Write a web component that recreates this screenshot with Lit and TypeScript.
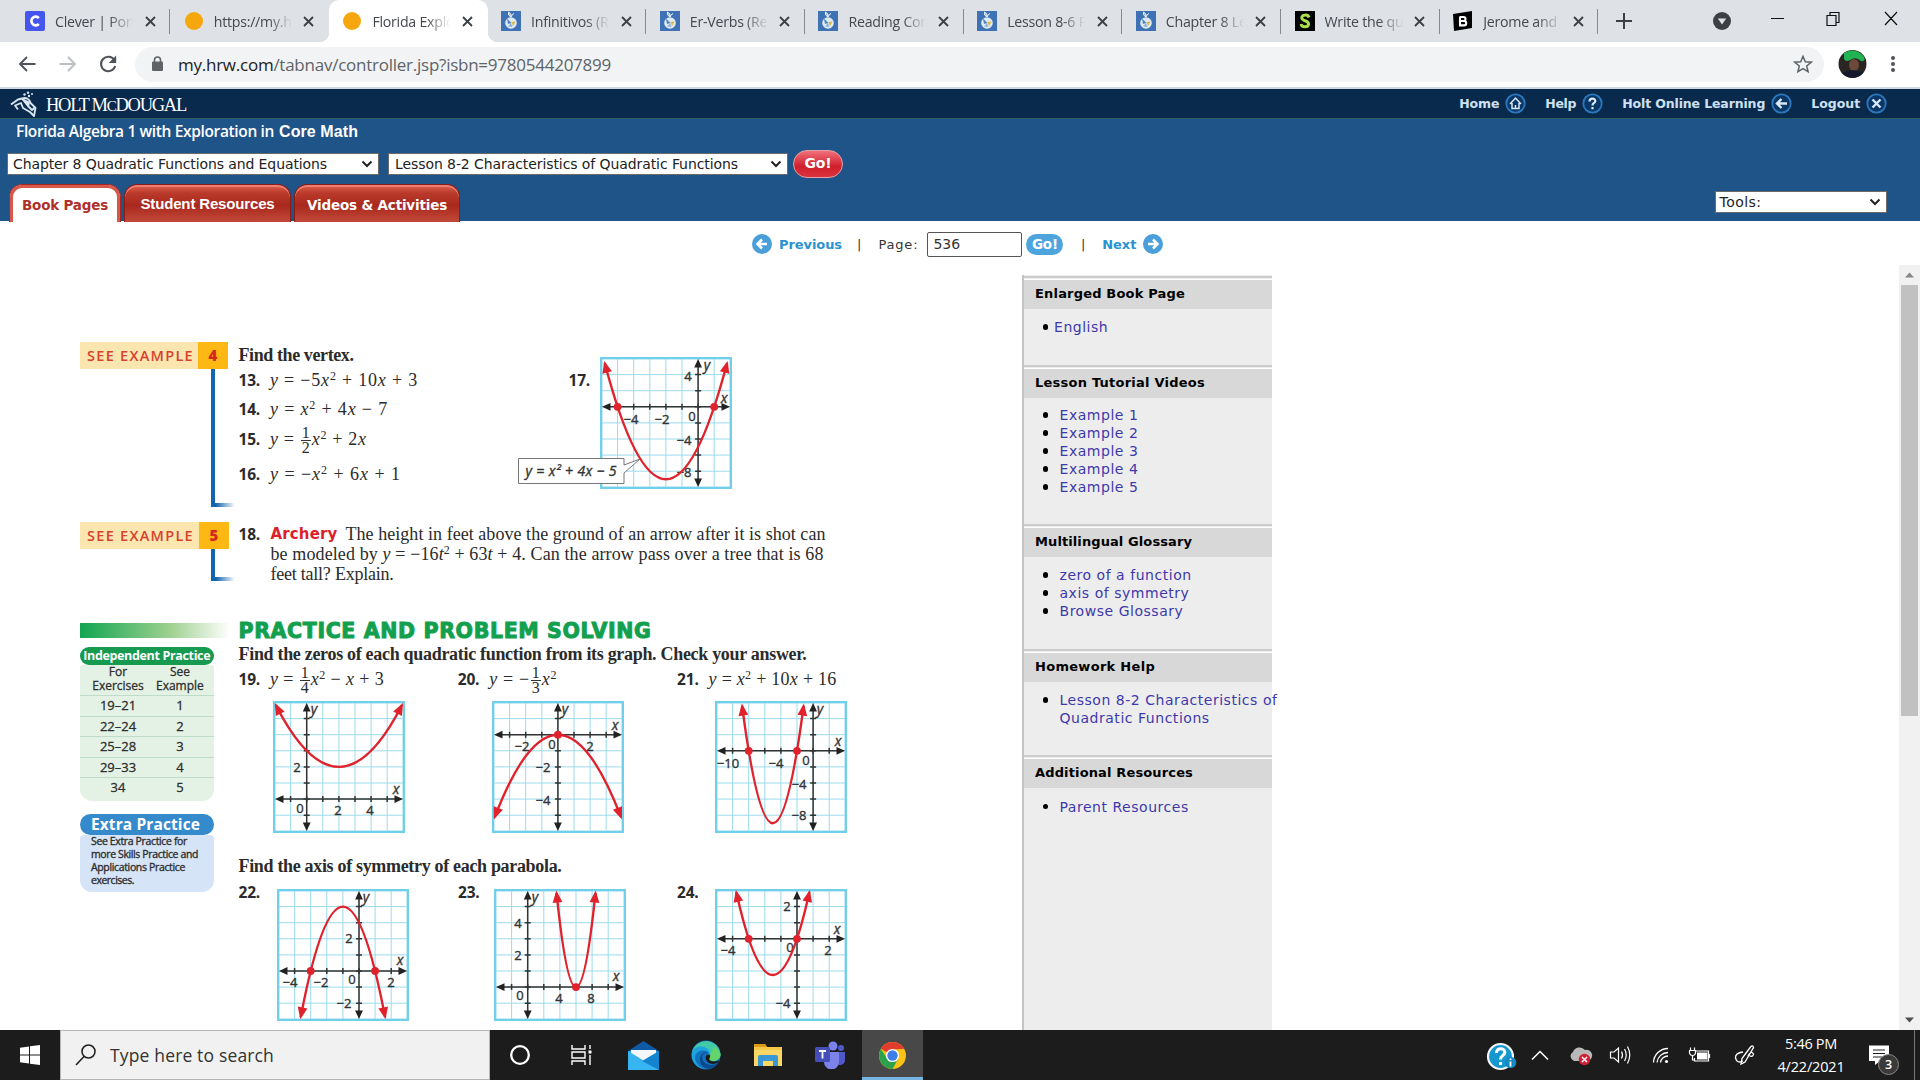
import { LitElement, html, svg, css, nothing } from "lit";
import { customElement, property } from "lit/decorators.js";

/** Sets its text to a given measure by distributing letter spacing. */
@customElement("fit-text")
class FitText extends LitElement {
  @property({ type: Number }) w = 0;
  static styles = css`:host { display: inline-block; white-space: pre; }`;
  firstUpdated() {
    const natural = this.getBoundingClientRect().width;
    const n = (this.textContent || "").length;
    if (this.w && n) this.style.letterSpacing = (this.w - natural) / n + "px";
  }
  render() { return html`<slot></slot>`; }
}

type Label = [string, number, number];
interface Plot {
  ox: number; oy: number; vx: number; vy: number; k: number; s: number;
  dots: [number, number][]; labels: Label[]; callout?: boolean;
}

const PLOTS: Record<string, Plot> = {
  17: { ox: 6, oy: 3, vx: 4, vy: 7.5, k: -0.5, s: 3.8, dots: [[1, 3], [7, 3]], callout: true,
    labels: [["4", 88, 19], ["y", 107, 8], ["x", 124, 41], ["−4", 31, 62], ["−2", 62, 62], ["0", 92, 59], ["−4", 84, 83], ["−8", 84, 115]] },
  19: { ox: 2, oy: 6, vx: 4, vy: 4, k: -0.25, s: 3.92, dots: [],
    labels: [["y", 41, 8], ["x", 123, 88], ["2", 24, 66], ["0", 27, 107], ["2", 65, 109], ["4", 97, 109]] },
  20: { ox: 4, oy: 2, vx: 4, vy: 2, k: 1 / 3, s: 3.92, dots: [[4, 2]],
    labels: [["y", 73, 8], ["x", 123, 24], ["−2", 30, 45], ["0", 60, 43], ["2", 98, 45], ["−2", 51, 66], ["−4", 51, 99]] },
  21: { ox: 6, oy: 3, vx: 3.5, vy: 7.5, k: -2, s: 1.91, dots: [[2, 3], [5, 3]],
    labels: [["y", 105, 8], ["x", 123, 40], ["−10", 13, 62], ["−4", 61, 62], ["0", 91, 59], ["−4", 84, 83], ["−8", 84, 114]] },
  22: { ox: 5, oy: 5, vx: 4, vy: 1, k: 1, s: 2.62, dots: [[2, 5], [6, 5]],
    labels: [["y", 89, 8], ["x", 123, 71], ["2", 72, 49], ["−4", 13, 93], ["−2", 44, 93], ["0", 75, 90], ["2", 114, 93], ["−2", 67, 114]] },
  23: { ox: 2, oy: 6, vx: 5, vy: 6, k: -4, s: 1.21, dots: [[5, 6]],
    labels: [["y", 41, 8], ["x", 122, 87], ["4", 24, 34], ["2", 24, 66], ["0", 26, 106], ["4", 65, 109], ["8", 97, 109]] },
  24: { ox: 5, oy: 3, vx: 3.5, vy: 5.25, k: -1, s: 2.27, dots: [[2, 3], [5, 3]],
    labels: [["x", 122, 40], ["2", 72, 17], ["−4", 13, 61], ["0", 75, 58], ["2", 113, 61], ["−4", 68, 114]] },
};

@customElement("parabola-graph")
class ParabolaGraph extends LitElement {
  @property() n = "17";
  static styles = css`
    :host { display: block; width: 132px; height: 132px; }
    svg { display: block; overflow: visible; }
    .frame { fill: #fff; stroke: #72cfe9; stroke-width: 2.4; }
    .grid { stroke: #9bdbec; stroke-width: 1; }
    .axis { stroke: #333; stroke-width: 1.5; fill: none; }
    .head { fill: #222; }
    .curve { stroke: #e0222d; stroke-width: 2.4; fill: none; }
    .red { fill: #e0222d; }
    text { font: 500 13px "Open Sans", "Noto Sans", sans-serif; fill: #333; text-anchor: middle; stroke: #333; stroke-width: .35; }
    .it { font-style: italic; font-size: 14px; }
    .note { fill: #fff; stroke: #777; stroke-width: 1; }
  `;
  render() {
    const p = PLOTS[this.n];
    const c = (v: number) => 1.5 + 16.1 * v;
    const idx = [1, 2, 3, 4, 5, 6, 7];
    const lift = p.k * p.s * p.s;
    const X = c(p.ox), Y = c(p.oy);
    const x0 = c(p.vx - p.s), x1 = c(p.vx + p.s), ye = c(p.vy + lift);
    const ang = (Math.atan2(2 * p.k * p.s, 1) * 180) / Math.PI;
    const tip = (x: number, y: number, a: number, cls: string, l = 9, w = 4) =>
      svg`<path class=${cls} transform="translate(${x} ${y}) rotate(${a})" d="M0 0L${-l} ${-w}L${-l} ${w}Z"/>`;
    const tx = 2.2 * Math.cos((ang * Math.PI) / 180), ty = 2.2 * Math.sin((ang * Math.PI) / 180);
    return html`<svg width="132" height="132" viewBox="0 0 132 132">
      <rect class="frame" x="1.2" y="1.2" width="129.6" height="129.6"/>
      ${idx.map((i) => svg`<path class="grid" d="M${c(i)} 2V130M2 ${c(i)}H130"/>`)}
      <path class="axis" d="M5 ${Y}H127M${X} 5V127"/>
      ${idx.map((i) => svg`<path class="axis" d="M${c(i)} ${Y - 3}v6M${X - 3} ${c(i)}h6"/>`)}
      ${tip(2, Y, 180, "head", 8.5, 3.9)}${tip(130, Y, 0, "head", 8.5, 3.9)}
      ${tip(X, 2, -90, "head", 8.5, 3.9)}${tip(X, 130, 90, "head", 8.5, 3.9)}
      ${p.labels.map(([t, x, y]) => svg`<text class=${t === "x" || t === "y" ? "it" : ""} x=${x} y=${y + 4.7}>${t}</text>`)}
      <path class="curve" d="M${x0} ${ye}Q${c(p.vx)} ${c(p.vy - lift)} ${x1} ${ye}"/>
      ${tip(x1 + tx, ye + ty, ang, "red", 12, 4.9)}${tip(x0 - tx, ye + ty, 180 - ang, "red", 12, 4.9)}
      ${p.dots.map(([x, y]) => svg`<circle class="red" cx=${c(x)} cy=${c(y)} r="3.9"/>`)}
      ${p.callout
        ? svg`<path class="note" d="M-81.5 101.5H24V108L40 102L24 116V126.500H-81.5Z"/>
          <text class="it" x="-29" y="119" textLength="91"><tspan>y</tspan> = x² + 4x − 5</text>`
        : nothing}
    </svg>`;
  }
}

const TABS = [
  ["clever", "Clever | Portal"], ["sun", "https://my.hrw.com"], ["sun", "Florida Exploration"],
  ["apple", "Infinitivos (Realidades)"], ["apple", "Er-Verbs (Realidades)"], ["apple", "Reading Comprehension"],
  ["apple", "Lesson 8-6 Practice"], ["apple", "Chapter 8 Lesson"], ["slader", "Write the quadratic"], ["brainly", "Jerome and his"],
];

const SECTIONS: { title: string; cls: string; links: string[] }[] = [
  { title: "Enlarged Book Page", cls: "s0", links: ["English"] },
  { title: "Lesson Tutorial Videos", cls: "s1", links: ["Example 1", "Example 2", "Example 3", "Example 4", "Example 5"] },
  { title: "Multilingual Glossary", cls: "s2", links: ["zero of a function", "axis of symmetry", "Browse Glossary"] },
  { title: "Homework Help", cls: "s3", links: ["Lesson 8-2 Characteristics of\nQuadratic Functions"] },
  { title: "Additional Resources", cls: "s4", links: ["Parent Resources"] },
];
const TITLE_W = [150, 170, 157, 120, 158];

@customElement("app-root")
class AppRoot extends LitElement {
  static styles = css`
    :host { display: block; width: 1920px; height: 1080px; overflow: hidden; background: #fff; color: #222; font-family: "Open Sans", "Noto Sans", sans-serif; }
    * { box-sizing: border-box; }
    svg { display: block; flex: none; }
    .row { display: flex; align-items: center; }
    .page { display: flex; flex-direction: column; height: 1080px; }

    .strip { display: flex; height: 42px; background: #dee1e6; padding-left: 11.5px; }
    .tab { width: 158.7px; height: 42px; display: flex; align-items: center; padding-left: 13.5px; flex: none; position: relative; }
    .tab.sep { background: linear-gradient(#868a8e, #868a8e) right 9px / 1px 25px no-repeat; }
    .tab.on { background: #fff; border-radius: 10px 10px 0 0; }
    .tab.on::before, .tab.on::after { content: ""; position: absolute; bottom: 0; width: 10px; height: 10px; }
    .tab.on::before { left: -10px; background: radial-gradient(circle at 0 0, transparent 10px, #fff 10.5px); }
    .tab.on::after { right: -10px; background: radial-gradient(circle at 100% 0, transparent 10px, #fff 10.5px); }
    .title { width: 80px; margin-left: 10px; overflow: hidden; white-space: nowrap; font-size: 14.2px; letter-spacing: -.25px; color: #45494d; -webkit-mask-image: linear-gradient(90deg, #000 68%, transparent 98%); }
    .close { margin-left: 9.5px; }
    .plus { margin: 13px 0 0 17.5px; }
    .wc { display: flex; align-items: center; margin-left: auto; height: 42px; }

    .bar { height: 47px; display: flex; align-items: center; border-bottom: 2px solid #cfdae6; padding: 0 0 1px 17px; background: #fff; }
    .pill { display: flex; align-items: center; width: 1689px; height: 35px; border-radius: 18px; background: #f1f3f4; margin-left: 15px; padding-left: 16px; }
    .url { font-size: 17px; color: #5f6368; margin-left: 14px; }
    .url b { font-weight: 400; color: #202124; }
    .pill .star { margin-left: auto; margin-right: 11px; }

    .navy { height: 30px; background: #0a2a4d; border-bottom: 1px solid #2c5d5d; display: flex; align-items: center; padding-left: 10px; color: #fff; }
    .holt { font-family: "Liberation Serif", serif; font-size: 18.5px; margin-left: 9px; line-height: 24px; padding-top: 3px; }
    .small { font-size: 15px; }
    .top { margin-left: auto; display: flex; align-items: center; padding: 0 33.5px 1px 0; font: bold 12.5px "DejaVu Sans", sans-serif; color: #cfe0f2; }
    .top svg { margin: 0 19.7px 0 5.3px; }
    .top svg:last-child { margin-right: 0; }
    .blue { height: 102px; background: #1f5488; display: flex; justify-content: space-between; }
    .subject { color: #fff; font-weight: 600; font-size: 15.5px; line-height: 20px; margin: 2px 0 0 16px; display: flex; gap: 5px; }
    .subject .core { font-family: "Liberation Sans", sans-serif; font-weight: 700; font-size: 16px; padding-top: 1px; }
    .picks { display: flex; align-items: center; margin: 7px 0 0 7px; height: 29px; }
    .select { height: 22px; background: #fff; border: 1px solid #6b6b6b; display: flex; align-items: center; justify-content: space-between; padding: 0 5px; font: 14px "DejaVu Sans", sans-serif; color: #222; }
    .c1 { width: 372px; } .c2 { width: 400px; margin: 0 5px 0 9px; padding-left: 6px; }
    .tools { width: 172px; margin: 72px 33.5px 0 0; padding-left: 4px; }
    .go { width: 50px; height: 28px; border-radius: 14px; background: linear-gradient(#f0707a, #cf1f2c 60%, #dc3340); border: 1.5px solid #e4a0a8; color: #fff; font: bold 14px/24px "DejaVu Sans", sans-serif; text-align: center; }
    .rtabs { display: flex; gap: 3px; margin: 6px 0 0 9px; height: 38px; }
    .rt { height: 38px; border-radius: 13px 13px 0 0; color: #fff; background: linear-gradient(#e2604f, #b93a2b 22%, #a9281d 55%, #c14a3a); border: 1.5px solid #8c1c18; border-bottom: 0; box-shadow: inset 0 2px 0 #e98072; display: flex; align-items: center; justify-content: center; font: bold 14.5px "DejaVu Sans", sans-serif; padding-top: 2px; }
    .rt.a { width: 112px; background: #fff; color: #b0302a; box-shadow: inset 0 0 0 3px #d8584c; border-color: #a62620; font-size: 13.5px; position: relative; border-bottom: 0; }
    .rt.a::after { content: ""; position: absolute; left: 3px; right: 3px; bottom: 0; height: 4px; background: #fff; }
    .rt.b { width: 167px; font: bold 15px "Liberation Sans", sans-serif; padding-top: 0; }
    .rt.c { width: 166px; font-size: 13.5px; }

    .pager { height: 44px; display: flex; align-items: center; padding: 2px 0 0 752px; font: 13px "DejaVu Sans", sans-serif; color: #333; }
    .bar1 { margin-left: 15px; } .pg { margin-left: 17px; } .bar2 { margin-left: 17.5px; }
    .prev { margin-left: 7px; } .next { margin: 0 7px 0 17px; }
    .lk { color: #2a93cf; font: bold 13px "DejaVu Sans", sans-serif; }
    .field { width: 95px; height: 25px; border: 1.5px solid #555; border-radius: 2px; padding-left: 5px; line-height: 23px; font-size: 14px; margin-left: 9px; }
    .go2 { width: 37px; height: 21px; border-radius: 10.500px; background: #4ea5dd; color: #fff; font: bold 13.5px/20px "DejaVu Sans", sans-serif; text-align: center; margin-left: 4px; }

    .main { display: flex; height: 765px; overflow: hidden; }
    .book { width: 1022px; padding-left: 80px; flex: none; color: #2b2b2b; }
    .block { display: flex; }
    .left { width: 158.500px; flex: none; }
    .see { display: flex; height: 27px; width: 148px; background: #fbe6b0; color: #d8412f; font-weight: 600; font-size: 14.500px; line-height: 27px; padding-left: 7px; justify-content: space-between; }
    .see i { font: 800 15px/27px "Open Sans", sans-serif; background: #fdb813; width: 30px; text-align: center; color: #d4281e; }
    .hook { width: 24px; margin-left: 131px; background: linear-gradient(#1266b0, #1266b0) left top / 4px 100% no-repeat, linear-gradient(90deg, #1266b0 20%, #fff) left bottom / 24px 4px no-repeat; }
    .b1 { padding-top: 77px; height: 257px; }
    .b1 .hook { height: 138px; } .b2 .hook { height: 32px; }
    .b2 { height: 101px; } .b2 .see { width: 149px; }
    .ln { font-family: "Liberation Serif", serif; font-size: 18px; line-height: 20px; height: 20px; display: flex; white-space: nowrap; }
    .bd { font-weight: 700; }
    .no { font: 700 15.5px/20px "Open Sans", sans-serif; width: 31.500px; flex: none; letter-spacing: -.2px; }
    em { font-style: italic; }
    sup { font-size: 12px; line-height: 0; vertical-align: 6px; }
    .frac { display: inline-flex; flex-direction: column; vertical-align: middle; text-align: center; line-height: 14px; margin: -8px 1px; font-size: 16px; letter-spacing: 0; }
    .frac span:first-child { border-bottom: 1px solid #333; padding: 0 1px; }
    .m5 { margin-top: 5px; } .m9 { margin-top: 9px; } .m10 { margin-top: 10px; } .m14 { margin-top: 15px; }
    .probs { width: 330px; padding-top: 3px; }
    .n17 { padding-top: 28px; width: 31px; } .g17 { padding-top: 15px; }
    .arch { color: #dd1f2b; font: bold 15px/20px "DejaVu Sans", sans-serif; margin-right: 8px; }
    .in { padding-left: 32px; }
    .t18 .no { width: 32px; }
    .t18 .ln:first-child { margin-top: 2px; }
    .pbar { width: 150px; height: 15px; background: linear-gradient(90deg, #12a551, #9ed08f 60%, #fff); }
    h2 { margin: 0; font: bold 20.5px/22px "DejaVu Sans", sans-serif; color: #12a04f; -webkit-text-stroke: 1px #12a04f; height: 21px; display: flex; margin-top: -3.500px; }
    .zeros { margin-top: 3.500px; } .eqs { margin-top: 5px; }
    .ip { margin-top: 9px; width: 133.500px; height: 18px; border-radius: 9px; background: #159a50; color: #fff; font: 700 12.5px/17px "Open Sans", sans-serif; text-align: center; }
    .tbl { width: 133.500px; height: 136px; background: #e3f2e5; border-radius: 3px 3px 12px 12px; display: grid; grid-template-columns: 76px 1fr; grid-template-rows: 31px repeat(5, 20.6px); font-size: 13px; font-weight: 500; text-align: center; line-height: 19px; }
    .tbl div { border-bottom: 1px solid #bfdcc8; -webkit-text-stroke: .3px #333; }
    .tbl div:nth-last-child(-n+2) { border: 0; }
    .tbl .hd { line-height: 14px; font-size: 12px; }
    .tbl .r { padding-right: 10px; }
    .ep { margin-top: 12.500px; width: 133.500px; height: 21.5px; border-radius: 11px; background: #358acb; color: #fff; font: 700 15.5px/20px "Open Sans", sans-serif; padding-left: 11px; }
    .eb { width: 133.500px; height: 57px; border-radius: 4px 4px 12px 12px; background: #d5e4f6; padding: 0 0 0 11px; font-size: 10.5px; line-height: 13px; -webkit-text-stroke: .35px #333; }
    .eb div { height: 13px; }
    .three { display: flex; }
    .three .q { width: 219.300px; }
    .gr { display: flex; height: 132px; }
    .g1 { padding-left: 34px; gap: 87px; margin-top: 11.500px; height: 155.500px; }
    .g1 parabola-graph:last-child { margin-left: 4.500px; }
    .g2 { margin-top: 13px; }
    .g2 .row { align-items: flex-start; width: 219.500px; }
    .g2 .row:nth-child(2) { width: 219px; }
    .g2 .ln { margin-top: -7px; width: 38.500px; }
    .g2 .row:nth-child(2) .ln { width: 35.500px; }
    .g2 .row:nth-child(3) .ln { width: 37.500px; }

    .side { width: 250px; background: #ededed; margin-top: 10px; border-left: 2px solid #c4c4c4; flex: none; font-family: "DejaVu Sans", sans-serif; }
    .sec { border-top: 2px solid #ccc; }
    .sec h3 { margin: 1px 0 0; border-top: 1px solid #fff; background: #d8d8d8; height: 30px; padding-left: 11px; font: bold 13px/27px "DejaVu Sans", sans-serif; color: #000; }
    .s0 { margin-top: 1px; height: 88.5px; } .s1 { height: 159px; } .s2 { height: 125px; } .s3 { height: 106.5px; }
    ul { margin: 8.500px 0 0; padding: 0; list-style: none; font-size: 14px; line-height: 18px; letter-spacing: .53px; }
    .s2 ul, .s3 ul, .s4 ul { margin-top: 9.500px; }
    .s0 ul { margin-top: 9px; }
    li { display: flex; color: #3d39ab; white-space: pre; padding-left: 18.500px; }
    li::before { content: ""; width: 5.500px; height: 5.500px; border-radius: 3px; background: #000; margin: 6px 11.500px 0 0; flex: none; }
    .s0 li::before { margin-right: 6px; }
    .sb { margin-left: auto; width: 21px; background: #f1f1f1; display: flex; flex-direction: column; align-items: center; padding: 7px 0; }
    .thumb { width: 17px; height: 431px; background: #c1c1c1; margin-top: 7px; }
    .sb svg:last-child { margin-top: auto; }

    .task { height: 50px; background: #1c1c1c; display: flex; color: #fff; }
    .start { width: 60px; padding: 15px 0 0 20px; }
    .search { width: 430px; height: 50px; background: #f1f1f1; border: 1px solid #b5b5b5; display: flex; align-items: center; padding-left: 14px; color: #333; font-size: 17.5px; }
    .search fit-text { margin-left: 14px; }
    .app { width: 62.200px; display: flex; align-items: center; justify-content: center; flex: none; }
    .app.first { width: 59px; margin-right: 1.500px; }
    .app.on { background: #484848; border-bottom: 3px solid #76b4e4; padding-top: 3px; width: 61px; margin-left: 1px; }
    .tray { margin-left: auto; display: flex; align-items: center; }
    .clock { width: 80px; text-align: center; font-size: 14.5px; line-height: 23px; }
    .edge { width: 6px; height: 50px; border-left: 1px solid #777; }
  `;

  fav(kind: string) {
    if (kind === "clever") return html`<svg width="20" height="20" viewBox="0 0 20 20"><rect width="20" height="20" rx="2" fill="#4556ee"/><path d="M13.800 7.200A4.200 4.300 0 1 0 13.800 12.800" fill="none" stroke="#fff" stroke-width="2.700"/></svg>`;
    if (kind === "sun") return html`<svg width="20" height="20" viewBox="0 0 20 20"><circle cx="10" cy="10" r="9" fill="#f5a70d"/></svg>`;
    if (kind === "apple") return html`<svg width="20" height="20" viewBox="0 0 20 20"><rect width="20" height="20" fill="#3f72b4"/><path d="M10 6Q6.500 4.500 7.500 1Q11 2.500 10 6Q11 3 13 2.500" stroke="#e8f0f8" stroke-width="1" fill="#e8f0f8" fill-opacity=".5"/><circle cx="10" cy="12" r="5.800" fill="#dfeaf5"/><path d="M10.500 12L6 7.500L7 13Z" fill="#4f86bd"/><path d="M10.500 11L14.500 10.500L12 15Z" fill="#d9b83f"/><path d="M10 12L7 15.500L11.500 16Z" fill="#8fb3d6"/></svg>`;
    if (kind === "slader") return html`<svg width="20" height="20" viewBox="0 0 20 20"><rect width="20" height="20" fill="#000"/><path d="M14 6.500C13 3 6.500 3.500 6.800 7C7 10.500 13.500 9 13.500 13C13.500 16.500 7 17 6 13" fill="none" stroke="#a9e04b" stroke-width="3"/></svg>`;
    return html`<svg width="20" height="20" viewBox="0 0 20 20"><path d="M0 3L19 0V17L1 20Z" fill="#000"/><path d="M7 5.500V14.500M7 6h3.500a2 2 0 0 1 0 4H7h4a2.200 2.200 0 0 1 0 4.400H6" fill="none" stroke="#fff" stroke-width="2.100"/></svg>`;
  }
  arrow(dir: number) {
    return html`<svg width="20" height="20" viewBox="0 0 20 20"><circle cx="10" cy="10" r="10" fill="#4a9fdb"/><path transform=${dir < 0 ? "" : "rotate(180 10 10)"} d="M15 10H6M10 5.500L5.500 10L10 14.500" fill="none" stroke="#fff" stroke-width="2.500"/></svg>`;
  }
  chev() {
    return html`<svg width="12" height="8" viewBox="0 0 12 8"><path d="M1.500 1.500L6 6L10.500 1.500" fill="none" stroke="#222" stroke-width="2"/></svg>`;
  }
  round(inner: unknown) {
    return html`<svg width="21" height="21" viewBox="0 0 21 21"><circle cx="10.500" cy="10.500" r="9.200" fill="#0b3767" stroke="#2b78bd" stroke-width="1.800"/>${inner}</svg>`;
  }

  chrome() {
    return html`
    <div class="strip">
      ${TABS.map(([k, t], i) => html`<div class="tab ${i === 2 ? "on" : i === 1 ? "" : "sep"}">
        ${this.fav(k)}<div class="title">${t}</div>
        <svg class="close" width="11" height="11" viewBox="0 0 11 11"><path d="M1 1L10 10M10 1L1 10" stroke="#3c4043" stroke-width="1.800"/></svg>
      </div>`)}
      <svg class="plus" width="16" height="16" viewBox="0 0 16 16"><path d="M8 0V16M0 8H16" stroke="#3c4043" stroke-width="2"/></svg>
      <div class="wc">
        <svg width="207" height="42" viewBox="0 0 207 42"><circle cx="9" cy="21" r="9" fill="#3c4043"/><path d="M4.800 18.500h8.400L9 24.500Z" fill="#dee1e6"/>
        <path d="M58 18.500H71M114 15.500h9v10h-9zM117 15.500v-3h9v10h-3M172 12L184 25M184 12L172 25" fill="none" stroke="#111" stroke-width="1.200"/></svg>
      </div>
    </div>
    <div class="bar">
      <svg width="103" height="22" viewBox="0 0 103 22">
        <path d="M18.500 11H3M10 4L3 11L10 18" fill="none" stroke="#50545a" stroke-width="1.900"/>
        <path d="M42.500 11H58M51 4L58 11L51 18" fill="none" stroke="#bcbfc3" stroke-width="1.900"/>
        <path d="M97.300 7A7.200 7.200 0 1 0 98.200 13" fill="none" stroke="#50545a" stroke-width="2.100"/><path d="M99.200 2.500V10H91.700Z" fill="#50545a"/>
      </svg>
      <div class="pill">
        <svg width="13" height="16" viewBox="0 0 13 16"><rect x="1" y="5.500" width="11" height="9.500" rx="1" fill="#5f6368"/><path d="M3.500 6V4a3 3 0 0 1 6 0V6" fill="none" stroke="#5f6368" stroke-width="1.600"/></svg>
        <div class="url"><fit-text w="433"><b>my.hrw.com</b>/tabnav/controller.jsp?isbn=9780544207899</fit-text></div>
        <svg class="star" width="20" height="20" viewBox="0 0 20 20"><path d="M10 2.300L12.300 7.700L18.200 8.200L13.700 12L15.100 17.700L10 14.700L4.900 17.700L6.300 12L1.800 8.200L7.700 7.700Z" fill="none" stroke="#5f6368" stroke-width="1.500"/></svg>
      </div>
      <svg width="80" height="30" viewBox="0 0 80 30"><circle cx="28.500" cy="15" r="14" fill="#2a2523"/><path d="M20 4A14 14 0 0 1 40 8Q42 13 37 12Q33 8 28 10Q22 14 20 10Z" fill="#21b351"/><ellipse cx="30" cy="16" rx="5" ry="6" fill="#6b4a3c"/><path d="M18 24Q28 18 39 24A14 14 0 0 1 18 24Z" fill="#141a2c"/>
      <g fill="#50545a"><circle cx="69" cy="9" r="2"/><circle cx="69" cy="15" r="2"/><circle cx="69" cy="21" r="2"/></g></svg>
    </div>`;
  }

  header() {
    return html`
    <div class="navy">
      <svg width="27" height="26" viewBox="0 0 27 26"><g fill="none" stroke="#d9e6f2" stroke-linejoin="round"><path d="M1 13.500L8 8.500L12 7.500L18 15L22 19L25.500 16" stroke-width="2"/><path d="M12 7.500C16 6 20 8 20.500 12L25.500 17L24 25L20 21L13 17L11 12L5 14.500L8 18.500" stroke-width="1.800"/></g><path d="M12 7L20 11L19 16Z" fill="#d9e6f2"/><g fill="#d9e6f2"><circle cx="14.500" cy="3.500" r="1.200"/><circle cx="18" cy="1.800" r="1.200"/><circle cx="19" cy="5" r="1.200"/><circle cx="22" cy="3" r="1"/></g></svg>
      <div class="holt"><fit-text w="140">HOLT M<span class="small">C</span>DOUGAL</fit-text></div>
      <div class="top">
        <fit-text w="40">Home</fit-text>${this.round(svg`<path d="M5 11L10.500 5L16 11M7 10V15.500H14V10M10.500 15.500V12" fill="none" stroke="#d8e9f8" stroke-width="1.500"/>`)}
        <fit-text w="31">Help</fit-text>${this.round(svg`<path d="M7.500 8.500C7.500 4.500 13.500 4.800 13.300 8.200C13.200 10 10.500 10 10.500 12.500M10.500 14V16.200" fill="none" stroke="#d8e9f8" stroke-width="2.200"/>`)}
        <fit-text w="143">Holt Online Learning</fit-text>${this.round(svg`<path d="M16 10.500H7M10.500 6L6 10.500L10.500 15" fill="none" stroke="#d8e9f8" stroke-width="2.400"/>`)}
        <fit-text w="49">Logout</fit-text>${this.round(svg`<path d="M6.500 6.500L14.500 14.500M14.500 6.500L6.500 14.500" stroke="#d8e9f8" stroke-width="2.400"/>`)}
      </div>
    </div>
    <div class="blue">
      <div>
        <div class="subject"><fit-text w="258">Florida Algebra 1 with Exploration in</fit-text><fit-text class="core" w="79">Core Math</fit-text></div>
        <div class="picks">
          <div class="select c1"><fit-text w="314">Chapter 8 Quadratic Functions and Equations</fit-text>${this.chev()}</div>
          <div class="select c2"><fit-text w="343">Lesson 8-2 Characteristics of Quadratic Functions</fit-text>${this.chev()}</div>
          <div class="go"><fit-text w="27">Go!</fit-text></div>
        </div>
        <div class="rtabs">
          <div class="rt a"><fit-text w="86">Book Pages</fit-text></div>
          <div class="rt b"><fit-text w="134">Student Resources</fit-text></div>
          <div class="rt c"><fit-text w="140">Videos &amp; Activities</fit-text></div>
        </div>
      </div>
      <div class="select tools"><fit-text w="42">Tools:</fit-text>${this.chev()}</div>
    </div>
    <div class="pager">
      ${this.arrow(-1)}<fit-text class="lk prev" w="63">Previous</fit-text>
      <span class="bar1">|</span><fit-text class="pg" w="40">Page:</fit-text>
      <div class="field">536</div><div class="go2"><fit-text w="26">Go!</fit-text></div>
      <span class="bar2">|</span><fit-text class="lk next" w="34">Next</fit-text>${this.arrow(1)}
    </div>`;
  }

  frac(a: string, b: string) {
    return html`<span class="frac"><span>${a}</span><span>${b}</span></span>`;
  }

  book() {
    const y = html`<em>y</em>`, x = html`<em>x</em>`, sq = html`<sup>2</sup>`;
    return html`<div class="book">
      <div class="block b1">
        <div class="left"><div class="see"><fit-text w="107">SEE EXAMPLE</fit-text><i>4</i></div><div class="hook"></div></div>
        <div class="probs">
          <div class="ln bd"><fit-text w="115">Find the vertex.</fit-text></div>
          <div class="ln m5"><span class="no">13.</span><fit-text w="148">${y} = −5${x}${sq} + 10${x} + 3</fit-text></div>
          <div class="ln m9"><span class="no">14.</span><fit-text w="118">${y} = ${x}${sq} + 4${x} − 7</fit-text></div>
          <div class="ln m10"><span class="no">15.</span><fit-text w="98">${y} = ${this.frac("1", "2")}${x}${sq} + 2${x}</fit-text></div>
          <div class="ln m14"><span class="no">16.</span><fit-text w="131">${y} = −${x}${sq} + 6${x} + 1</fit-text></div>
        </div>
        <div class="n17"><div class="ln"><span class="no">17.</span></div></div>
        <div class="g17"><parabola-graph n="17"></parabola-graph></div>
      </div>
      <div class="block b2">
        <div class="left"><div class="see"><fit-text w="107">SEE EXAMPLE</fit-text><i>5</i></div><div class="hook"></div></div>
        <div class="t18">
          <div class="ln"><span class="no">18.</span><fit-text class="arch" w="67">Archery</fit-text><fit-text w="480">The height in feet above the ground of an arrow after it is shot can</fit-text></div>
          <div class="ln in"><fit-text w="553">be modeled by ${y} = −16<em>t</em>${sq} + 63<em>t</em> + 4. Can the arrow pass over a tree that is 68</fit-text></div>
          <div class="ln in"><fit-text w="123">feet tall? Explain.</fit-text></div>
        </div>
      </div>
      <div class="block">
        <div class="left">
          <div class="pbar"></div>
          <div class="ip"><fit-text w="127">Independent Practice</fit-text></div>
          <div class="tbl">
            <div class="hd">For<br>Exercises</div><div class="hd r">See<br>Example</div>
            ${[["19–21", "1"], ["22–24", "2"], ["25–28", "3"], ["29–33", "4"], ["34", "5"]].map(([a, b]) => html`<div>${a}</div><div class="r">${b}</div>`)}
          </div>
          <div class="ep"><fit-text w="109">Extra Practice</fit-text></div>
          <div class="eb">
            <div><fit-text w="96">See Extra Practice for</fit-text></div><div><fit-text w="107">more Skills Practice and</fit-text></div>
            <div><fit-text w="94">Applications Practice</fit-text></div><div><fit-text w="43">exercises.</fit-text></div>
          </div>
        </div>
        <div>
          <h2><fit-text w="413">PRACTICE AND PROBLEM SOLVING</fit-text></h2>
          <div class="ln bd zeros"><fit-text w="568">Find the zeros of each quadratic function from its graph. Check your answer.</fit-text></div>
          <div class="three eqs">
            <div class="q ln"><span class="no">19.</span><fit-text w="115">${y} = ${this.frac("1", "4")}${x}${sq} − ${x} + 3</fit-text></div>
            <div class="q ln"><span class="no">20.</span><fit-text w="69">${y} = −${this.frac("1", "3")}${x}${sq}</fit-text></div>
            <div class="q ln"><span class="no">21.</span><fit-text w="128">${y} = ${x}${sq} + 10${x} + 16</fit-text></div>
          </div>
          <div class="gr g1">
            <parabola-graph n="19"></parabola-graph><parabola-graph n="20"></parabola-graph><parabola-graph n="21"></parabola-graph>
          </div>
          <div class="ln bd"><fit-text w="323">Find the axis of symmetry of each parabola.</fit-text></div>
          <div class="gr g2">
            ${["22", "23", "24"].map((n) => html`<div class="row"><div class="ln"><span class="no">${n}.</span></div><parabola-graph n=${n}></parabola-graph></div>`)}
          </div>
        </div>
      </div>
    </div>`;
  }

  side() {
    return html`<div class="side">
      ${SECTIONS.map((s, i) => html`<div class="sec ${s.cls}"><h3><fit-text w=${TITLE_W[i]}>${s.title}</fit-text></h3>
        <ul>${s.links.map((l) => html`<li><span>${l}</span></li>`)}</ul></div>`)}
    </div>
    <div class="sb">
      <svg width="9" height="6" viewBox="0 0 9 6"><path d="M0 5.500L4.500 .5L9 5.500Z" fill="#888"/></svg>
      <div class="thumb"></div>
      <svg width="9" height="6" viewBox="0 0 9 6"><path d="M0 .5L4.500 5.500L9 .5Z" fill="#505050"/></svg>
    </div>`;
  }

  task() {
    return html`<div class="task">
      <div class="start"><svg width="20" height="20" viewBox="0 0 20 20" fill="#fff"><path d="M0 2.800L9 1.500V9.500H0ZM10 1.300L20 0V9.500H10ZM0 10.500H9V18.500L0 17.200ZM10 10.500H20V20L10 18.700Z"/></svg></div>
      <div class="search"><svg width="21" height="22" viewBox="0 0 21 22"><circle cx="13.500" cy="7.500" r="6.500" fill="none" stroke="#222" stroke-width="1.600"/><path d="M9 12.500L1 21" stroke="#222" stroke-width="1.600"/></svg><fit-text w="164">Type here to search</fit-text></div>
      <div class="app first"><svg width="22" height="22" viewBox="0 0 22 22"><circle cx="11" cy="11" r="8.800" fill="none" stroke="#fff" stroke-width="2.300"/></svg></div>
      <div class="app"><svg width="22" height="20" viewBox="0 0 22 20"><path d="M1 0V4H14V0M1 20V16H14V20M1 7H14V13H1ZM19 0V4M19 10V20" fill="none" stroke="#fff" stroke-width="1.400"/><rect x="17.500" y="5.500" width="3" height="3" fill="#fff"/></svg></div>
      <div class="app"><svg width="31" height="29" viewBox="0 0 31 29"><path d="M0 10L15.500 0L31 10Z" fill="#0f5aa5"/><path d="M0 10H31V29H0Z" fill="#1f9be0"/><path d="M3 9H28V14L15.500 21L3 14Z" fill="#f4f8fb"/><path d="M0 10L31 29H0Z" fill="#36b5f0"/><path d="M31 10L14 20L31 29Z" fill="#1584cf"/></svg></div>
      <div class="app"><svg width="30" height="30" viewBox="0 0 30 30"><circle cx="15" cy="15" r="14.500" fill="#1272bd"/><path d="M1 12A14.500 14.500 0 0 1 29.500 14C29.500 20 24 21 20 20C18 19 20 18 19 15C17 8 6 6 1 12Z" fill="#42c9a8"/><path d="M1 12C5 3 19 6 19 14C14 8 5 10 4 17C4 24 10 29 17 29C7 30-1 22 1 12Z" fill="#1fa3df"/><path d="M17.500 12C10 12 9 21 16 24C20 26 25 25 27.500 22C24 31 10 31 9 21C8.500 16 12 11 17.500 12Z" fill="#0c4b91"/><path d="M19 15C19 18 17 19 19 20.500C23 22.500 30 20 29.500 14L24 6Z" fill="#63d56a"/><path d="M19.300 15.500C19 18 17.500 19 19 20.500C22 22 25.500 21.500 27.800 20.500L27.500 22.500Q21 25.500 16.500 22Q13 18 16 14.500Z" fill="#1c1c1c"/></svg></div>
      <div class="app"><svg width="28" height="24" viewBox="0 0 28 24"><path d="M0 1H11L13 4H28V23H0Z" fill="#f7c94b"/><path d="M0 1H11L13 4H0Z" fill="#dc9b17"/><path d="M0 7H28V23H0Z" fill="#fbd866"/><path d="M4 23V14a2 2 0 0 1 2-2H22a2 2 0 0 1 2 2V23H19V18H9V23Z" fill="#3a97d6"/></svg></div>
      <div class="app"><svg width="30" height="28" viewBox="0 0 30 28"><circle cx="18" cy="5" r="4.500" fill="#7b83eb"/><circle cx="26" cy="7" r="3" fill="#5059c9"/><path d="M20 11H30V19a5 5 0 0 1-9 3Z" fill="#5059c9"/><path d="M9 11H24V21a7.500 7.500 0 0 1-15 0Z" fill="#7b83eb"/><rect y="6" width="15" height="15" rx="1.500" fill="#464eb8"/><path d="M4 10H11M7.500 10V17.500" stroke="#fff" stroke-width="1.800"/></svg></div>
      <div class="app on"><svg width="27" height="27" viewBox="0 0 27 27"><circle cx="13.500" cy="13.500" r="13.500" fill="#fbc116"/><path d="M13.500 13.500L1.800 6.800A13.500 13.500 0 0 1 25.200 6.800L13.500 7.500Z" fill="#e33b2e"/><path d="M1.800 6.800A13.500 13.500 0 0 0 13.500 27L19 17L8 16.500Z" fill="#2ba24c"/><circle cx="13.500" cy="13.500" r="6.600" fill="#fff"/><circle cx="13.500" cy="13.500" r="5.200" fill="#3f7de8"/></svg></div>
      <div class="tray">
        <svg width="285" height="50" viewBox="1486 1030 285 50" fill="none" stroke="#fff" stroke-width="1.500">
          <circle cx="1500.500" cy="1056.500" r="12.500" fill="#1697cf" stroke="#f2f6f8" stroke-width="2.200"/><path d="M1496.500 1053C1496.500 1047 1505 1047.500 1504.800 1052.500C1504.500 1056 1500.500 1055.500 1500.500 1059.500M1500.500 1062V1065" stroke-width="3"/><circle cx="1510.500" cy="1062.500" r="5.800" fill="#1489c4" stroke="none"/><path d="M1510.500 1061.500V1066.500M1510.500 1058.500V1060" stroke-width="1.800"/>
          <path d="M1532 1059.500L1540 1051.500L1548 1059.500"/>
          <path d="M1574 1061a5 5 0 0 1-1-9a7 7 0 0 1 12-2a5 5 0 0 1 3 11Z" fill="#b9b9b9" stroke="none"/><circle cx="1584.500" cy="1059.500" r="5.800" fill="#d02036" stroke="none"/><path d="M1582 1057L1587 1062M1587 1057L1582 1062"/>
          <path d="M1610.500 1052H1614L1618.500 1048V1062L1614 1058H1610.500ZM1621.500 1051.500Q1623.500 1055 1621.500 1058.500M1624.500 1049Q1628 1055 1624.500 1061M1627.500 1046.500Q1632 1055 1627.500 1063.500" stroke-width="1.200"/>
          <path d="M1653.500 1062.500A14.500 14.500 0 0 1 1668 1048.500M1657 1062.500A11 11 0 0 1 1668 1052.500M1660.500 1062.500A7.500 7.500 0 0 1 1668 1056" stroke-width="1.300"/><circle cx="1666.500" cy="1061.500" r="1.600" fill="#fff" stroke="none"/>
          <path d="M1695.500 1051H1708.500V1061H1694.500V1058M1709.500 1054V1058M1690.500 1047.500V1050.500M1694.500 1047.500V1050.500M1689.500 1050.500H1695.500V1053Q1695 1055.500 1692.500 1055.500Q1690 1055.500 1689.500 1053ZM1692.500 1056V1060H1695" stroke-width="1.200"/><path d="M1697 1052.500H1707.500V1059.500H1697Z" fill="#fff" stroke="none"/>
          <path d="M1742 1058.500L1750.500 1047Q1753 1044.500 1753.500 1047.500L1745 1062L1741 1064ZM1743 1052Q1735 1053 1735.500 1058Q1737 1064 1743 1061M1748 1056Q1751 1050 1753.500 1054Q1753 1058 1748 1055" stroke-width="1.300"/>
        </svg>
        <div class="clock"><fit-text w="52">5:46 PM</fit-text><br><fit-text w="67">4/22/2021</fit-text></div>
        <svg width="63" height="50" viewBox="1851 1030 63 50"><path d="M1869 1045.500H1889V1061H1880L1875 1065V1061H1869Z" fill="#fff"/><path d="M1873 1050H1885M1873 1053.500H1885M1873 1057H1882" stroke="#222" stroke-width="1.200"/><circle cx="1888.500" cy="1064.500" r="10" fill="#3a3a3a" stroke="#8a8a8a"/><text x="1888.500" y="1069" text-anchor="middle" font-size="12.500" font-weight="600" font-family="Open Sans, sans-serif" fill="#fff">3</text></svg>
        <div class="edge"></div>
      </div>
    </div>`;
  }

  render() {
    return html`<div class="page">${this.chrome()}${this.header()}<div class="main">${this.book()}${this.side()}</div>${this.task()}</div>`;
  }
}
